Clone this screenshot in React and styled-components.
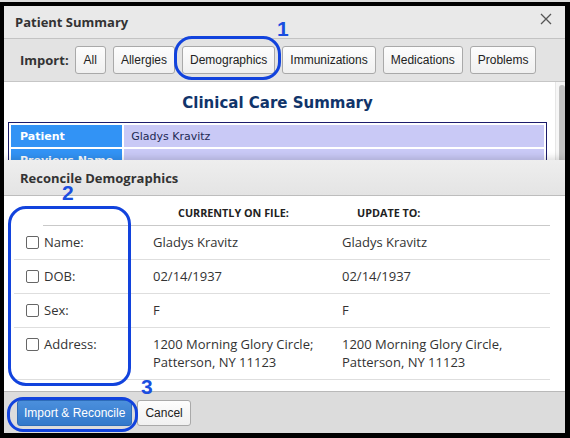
import styled, { createGlobalStyle } from "styled-components";

const Global = createGlobalStyle`
  html, body {
    margin: 0;
    padding: 0;
    background: #d8d8d8;
  }
  * {
    box-sizing: border-box;
  }
`;

const Page = styled.div`
  position: relative;
  width: 570px;
  height: 438px;
  padding-top: 2px;
  background: #dcdcdc;
`;

const Frame = styled.div`
  height: 436px;
  border: 4px solid #000;
  border-right-width: 5px;
  border-bottom-width: 5px;
  display: flex;
  flex-direction: column;
  background: #fff;
  overflow: hidden;
`;

const TitleBar = styled.div`
  height: 33px;
  flex-shrink: 0;
  padding: 0 13px 0 11px;
  display: flex;
  align-items: center;
  justify-content: space-between;
  background: #e9e9e9;
  border-bottom: 1px solid #c3c3c3;
  font-family: "Open Sans", sans-serif;
  font-weight: 700;
  font-size: 13px;
  color: #333;

  svg {
    margin-top: -7px;
  }
`;

const Toolbar = styled.div`
  height: 43px;
  flex-shrink: 0;
  padding: 0 16px;
  display: flex;
  align-items: center;
  gap: 7px;
  background: #e3e3e3;
  border-bottom: 1px solid #c6c6c6;
`;

const ToolLabel = styled.span`
  font-family: "Open Sans", sans-serif;
  font-weight: 700;
  font-size: 13px;
  color: #333;
  margin-right: -1px;
`;

const Button = styled.button`
  all: unset;
  height: ${(p) => (p.$small ? 24 : 26)}px;
  padding: 0 ${(p) => p.$pad || 7}px;
  display: inline-flex;
  align-items: center;
  border: 1px solid ${(p) => (p.$primary ? "#2d6cb9" : "#a9a9a9")};
  border-radius: 3px;
  background: ${(p) =>
    p.$primary
      ? "linear-gradient(#4b8fdc, #3379cb)"
      : "linear-gradient(#fdfdfd, #f0f0f0)"};
  color: ${(p) => (p.$primary ? "#fff" : "#222")};
  font-family: "Liberation Sans", Arial, sans-serif;
  font-size: 12px;
`;

const SummaryArea = styled.div`
  height: 78px;
  flex-shrink: 0;
  display: flex;
  overflow: hidden;
`;

const SummaryMain = styled.div`
  flex: 1;
  padding: 11px 8px 0 4px;
`;

const SummaryTitle = styled.h1`
  margin: 0 0 9px;
  text-align: center;
  font-family: "DejaVu Sans", Verdana, sans-serif;
  font-size: 15px;
  line-height: 20px;
  color: #10346a;
`;

const SummaryTable = styled.table`
  width: 100%;
  border: 1px solid #1b1b6b;
  border-spacing: 2px;
  font-family: "DejaVu Sans", Verdana, sans-serif;
  font-size: 11px;

  th {
    width: 108px;
    height: 22px;
    padding: 0 9px;
    text-align: left;
    white-space: nowrap;
    background: #3293f5;
    color: #fff;
  }

  td {
    padding: 0 7px;
    background: #c9c9f6;
    color: #1f2a55;
  }
`;

const Scrollbar = styled.div`
  width: 10px;
  padding: 3px 0 0 3px;
  background: #f6f6f6;
  border-left: 1px solid #e6e6e6;

  div {
    height: 120px;
    border-radius: 4px;
    background: #c3c3c3;
  }
`;

const Panel = styled.div`
  flex: 1;
  display: flex;
  flex-direction: column;
  position: relative;
  box-shadow: 0 -3px 6px rgba(0, 0, 0, 0.12);
`;

const PanelHeader = styled.div`
  height: 36px;
  flex-shrink: 0;
  padding-left: 16px;
  display: flex;
  align-items: center;
  background: linear-gradient(#eeeeee, #e4e4e4);
  border-bottom: 1px solid #bdbdbd;
  font-family: "Open Sans", sans-serif;
  font-weight: 700;
  font-size: 13px;
  color: #333;
`;

const TableArea = styled.div`
  flex: 1;
  padding: 1px 15px 0 10px;
  font-family: "Open Sans", sans-serif;
  font-size: 13px;
  color: #333;
`;

const Row = styled.div`
  display: grid;
  grid-template-columns: ${(p) => (p.$head ? "110px" : "139px")} 189px 1fr;
  margin-left: ${(p) => (p.$head ? 29 : 0)}px;
  padding: ${(p) => (p.$head ? "10px 0 6px" : "7px 0 8px")};
  border-bottom: 1px solid ${(p) => (p.$head ? "#c9c9c9" : "#dedede")};
  line-height: ${(p) => (p.$head ? "12px" : "18px")};
`;

const HeadCell = styled.div`
  padding-left: ${(p) => p.$indent || 0}px;
  font-weight: 700;
  font-size: 10.8px;
  color: #222;
`;

const FieldLabel = styled.label`
  display: flex;
  align-items: flex-start;
  gap: 5px;
  padding-left: 12px;
`;

const Check = styled.input`
  appearance: none;
  width: 13px;
  height: 13px;
  margin: 3px 0 0;
  border: 1px solid #666;
  border-radius: 2px;
  background: #fff;
`;

const Footer = styled.div`
  height: 42px;
  flex-shrink: 0;
  padding: 0 13px;
  display: flex;
  align-items: center;
  gap: 5px;
  background: #dcdcdc;
  border-top: 1px solid #b9b9b9;
`;

const Mark = styled.div`
  position: absolute;
  left: ${(p) => p.$x}px;
  top: ${(p) => p.$y}px;
  width: ${(p) => p.$w}px;
  height: ${(p) => p.$h}px;
  border: 3px solid #1243dd;
  border-radius: ${(p) => p.$r}px;
  pointer-events: none;
`;

const Num = styled.span`
  position: absolute;
  left: ${(p) => p.$x}px;
  top: ${(p) => p.$y}px;
  font-family: "Liberation Sans", Arial, sans-serif;
  font-weight: 700;
  font-size: 21px;
  line-height: 20px;
  color: #1a4ee0;
`;

const rows = [
  { label: "Name:", current: ["Gladys Kravitz"], update: ["Gladys Kravitz"] },
  { label: "DOB:", current: ["02/14/1937"], update: ["02/14/1937"] },
  { label: "Sex:", current: ["F"], update: ["F"] },
  {
    label: "Address:",
    current: ["1200 Morning Glory Circle;", "Patterson, NY 11123"],
    update: ["1200 Morning Glory Circle,", "Patterson, NY 11123"],
  },
];

const tabs = ["All", "Allergies", "Demographics", "Immunizations", "Medications", "Problems"];

const App = () => {
  return (
    <Page>
      <Global />
      <Frame>
        <TitleBar>
          Patient Summary
          <svg width="12" height="12" viewBox="0 0 12 12">
            <path d="M1 1L11 11M11 1L1 11" stroke="#555" strokeWidth="1.3" />
          </svg>
        </TitleBar>
        <Toolbar>
          <ToolLabel>Import:</ToolLabel>
          {tabs.map((t) => (
            <Button key={t} $pad={t === "All" ? 8 : 7}>
              {t}
            </Button>
          ))}
        </Toolbar>
        <SummaryArea>
          <SummaryMain>
            <SummaryTitle>Clinical Care Summary</SummaryTitle>
            <SummaryTable>
              <tbody>
                <tr>
                  <th>Patient</th>
                  <td>Gladys Kravitz</td>
                </tr>
                <tr>
                  <th>Previous Name</th>
                  <td></td>
                </tr>
              </tbody>
            </SummaryTable>
          </SummaryMain>
          <Scrollbar>
            <div />
          </Scrollbar>
        </SummaryArea>
        <Panel>
          <PanelHeader>Reconcile Demographics</PanelHeader>
          <TableArea>
            <Row $head>
              <div />
              <HeadCell $indent={25}>CURRENTLY ON FILE:</HeadCell>
              <HeadCell $indent={15}>UPDATE TO:</HeadCell>
            </Row>
            {rows.map((r) => (
              <Row key={r.label}>
                <FieldLabel>
                  <Check type="checkbox" />
                  {r.label}
                </FieldLabel>
                <div>
                  {r.current.map((l) => (
                    <div key={l}>{l}</div>
                  ))}
                </div>
                <div>
                  {r.update.map((l) => (
                    <div key={l}>{l}</div>
                  ))}
                </div>
              </Row>
            ))}
          </TableArea>
          <Footer>
            <Button $primary $small $pad={6}>
              Import &amp; Reconcile
            </Button>
            <Button $small $pad={7}>
              Cancel
            </Button>
          </Footer>
        </Panel>
      </Frame>

      <Mark $x={174} $y={36} $w={107} $h={44} $r={18} />
      <Mark $x={8} $y={206} $w={123} $h={180} $r={18} />
      <Mark $x={7} $y={397} $w={131} $h={35} $r={16} />
      <Num $x={277} $y={19}>1</Num>
      <Num $x={62} $y={183}>2</Num>
      <Num $x={141} $y={377}>3</Num>
    </Page>
  );
};

export default App;
